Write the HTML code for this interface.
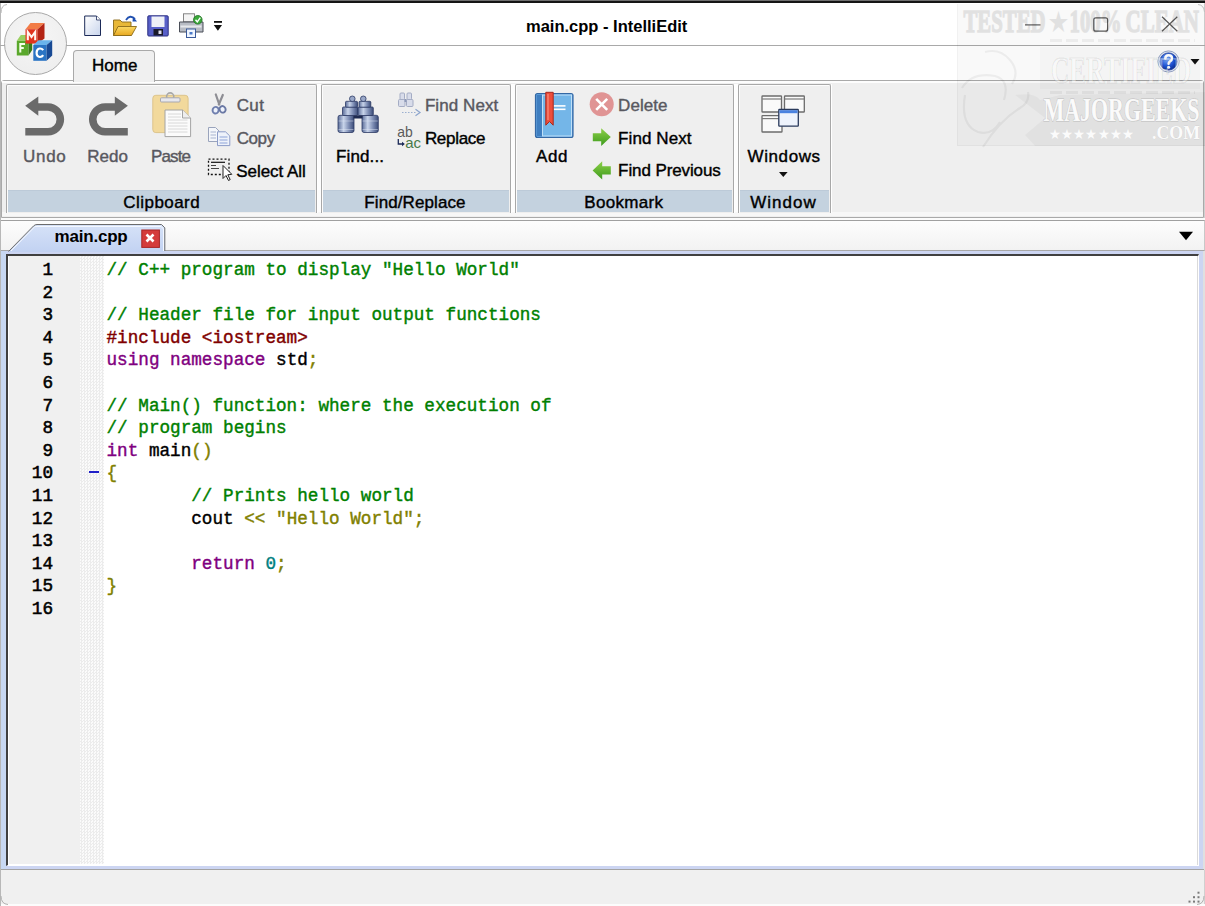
<!DOCTYPE html>
<html><head><meta charset="utf-8"><style>
html,body{margin:0;padding:0}
body{width:1205px;height:906px;overflow:hidden;position:relative;background:#fff}
div{box-sizing:border-box}
.t{position:absolute;white-space:pre;-webkit-text-stroke:0.4px currentColor}
.m span{-webkit-text-stroke:0.4px currentColor}
svg{position:absolute;left:0;top:0}
</style></head><body>
<div style="position:absolute;left:0px;top:0px;width:1205px;height:3px;background:linear-gradient(#707070 0,#707070 1px,#151515 1px)"></div>
<div style="position:absolute;left:0px;top:3px;width:1px;height:903px;background:#b8b8b8"></div>
<div style="position:absolute;left:1204px;top:3px;width:1px;height:903px;background:#d0d0d0"></div>
<div style="position:absolute;left:0px;top:45px;width:1205px;height:1px;background:#a9a9a9"></div>
<div style="position:absolute;left:4px;top:12px;width:63px;height:63px;border-radius:50%;border:1.5px solid #a9a9a9;background:radial-gradient(circle at 50% 40%,#f6f6f6,#ececec)"></div>
<div style="position:absolute;left:1px;top:80px;width:1203px;height:138px;border:1px solid #a9a9a9;border-radius:3px 3px 0 0;background:#efefef"></div>
<div style="position:absolute;left:2px;top:81px;width:1201px;height:2px;background:#fdfdfd"></div>
<div style="position:absolute;left:2px;top:212px;width:1201px;height:4px;background:#f7f7f7"></div>
<div style="position:absolute;left:73px;top:50px;width:82px;height:32px;border:1px solid #a9a9a9;border-bottom:none;border-radius:4px 4px 0 0;background:#f0f0f0"></div>
<div style="position:absolute;left:317px;top:84px;width:4px;height:128px;background:#fdfdfd"></div>
<div style="position:absolute;left:6px;top:83.5px;width:311px;height:129px;border:1px solid #a8a8a8;border-bottom:none;border-radius:2px 2px 0 0;background:#efefef;box-shadow:inset 1px 1px 0 #fcfcfc,1px 0 0 #fff"></div>
<div style="position:absolute;left:8px;top:190px;width:307px;height:21.5px;background:#c4d2df;border-top:1px solid #bccad8"></div>
<div style="position:absolute;left:511px;top:84px;width:4px;height:128px;background:#fdfdfd"></div>
<div style="position:absolute;left:321px;top:83.5px;width:190px;height:129px;border:1px solid #a8a8a8;border-bottom:none;border-radius:2px 2px 0 0;background:#efefef;box-shadow:inset 1px 1px 0 #fcfcfc,1px 0 0 #fff"></div>
<div style="position:absolute;left:323px;top:190px;width:186px;height:21.5px;background:#c4d2df;border-top:1px solid #bccad8"></div>
<div style="position:absolute;left:734px;top:84px;width:4px;height:128px;background:#fdfdfd"></div>
<div style="position:absolute;left:515px;top:83.5px;width:219px;height:129px;border:1px solid #a8a8a8;border-bottom:none;border-radius:2px 2px 0 0;background:#efefef;box-shadow:inset 1px 1px 0 #fcfcfc,1px 0 0 #fff"></div>
<div style="position:absolute;left:517px;top:190px;width:215px;height:21.5px;background:#c4d2df;border-top:1px solid #bccad8"></div>
<div style="position:absolute;left:831px;top:84px;width:1px;height:128px;background:#fdfdfd"></div>
<div style="position:absolute;left:738px;top:83.5px;width:93px;height:129px;border:1px solid #a8a8a8;border-bottom:none;border-radius:2px 2px 0 0;background:#efefef;box-shadow:inset 1px 1px 0 #fcfcfc,1px 0 0 #fff"></div>
<div style="position:absolute;left:740px;top:190px;width:89px;height:21.5px;background:#c4d2df;border-top:1px solid #bccad8"></div>
<div style="position:absolute;left:1px;top:218px;width:1204px;height:3px;background:#fbfbfb"></div>
<div style="position:absolute;left:1px;top:220px;width:1204px;height:31px;border-top:1px solid #a0a0a0;border-right:1px solid #c8c8c8;border-bottom:1px solid #a8a8a8;background:linear-gradient(#fdfdfd,#f2f2f2)"></div>
<div style="position:absolute;left:1px;top:251px;width:1203px;height:619px;background:#ccd5f2"></div>
<div style="position:absolute;left:1px;top:251px;width:5px;height:619px;background:#c8d8f2"></div>
<div style="position:absolute;left:6px;top:254px;width:1193px;height:612px;background:#fff;border-top:2px solid #404040;border-left:2px solid #404040;border-right:1px solid #fff;border-bottom:1px solid #fff"></div>
<div style="position:absolute;left:1197px;top:256px;width:1px;height:609px;background:#dadada"></div>
<div style="position:absolute;left:9px;top:256px;width:71px;height:608px;background:#f0f0f0"></div>
<div style="position:absolute;left:80px;top:256px;width:24px;height:608px;background-color:#fff;background-image:repeating-conic-gradient(#ececec 0 25%,#fbfbfb 0 50%);background-size:3px 3px"></div>
<div style="position:absolute;left:1203px;top:251px;width:2px;height:619px;background:#e0e0e0"></div>
<div style="position:absolute;left:89px;top:471px;width:10px;height:2px;background:#2020c8"></div>
<div style="position:absolute;left:957px;top:4px;width:248px;height:142px;background:rgba(0,0,0,0.025);border-left:1px solid rgba(0,0,0,0.03);border-bottom:1px solid rgba(0,0,0,0.03)"></div>
<div style="position:absolute;left:1px;top:869px;width:1203px;height:35px;background:#f0f0f0;border-top:1px solid #a4a4a4"></div>
<div style="position:absolute;left:1px;top:904px;width:1204px;height:2px;background:#fcfcfc"></div>
<svg width="1205" height="906" viewBox="0 0 1205 906"><defs>
<linearGradient id="gDoc" x1="0" y1="0" x2="1" y2="1"><stop offset="0" stop-color="#ffffff"/><stop offset="1" stop-color="#c8d4ec"/></linearGradient>
<linearGradient id="gFold" x1="0" y1="0" x2="0" y2="1"><stop offset="0" stop-color="#fbd964"/><stop offset="1" stop-color="#e8a820"/></linearGradient>
<linearGradient id="gBin" x1="0" y1="0" x2="1" y2="0"><stop offset="0" stop-color="#5a6c98"/><stop offset="0.35" stop-color="#c8d4ea"/><stop offset="0.7" stop-color="#7888b0"/><stop offset="1" stop-color="#3c4c78"/></linearGradient>
<radialGradient id="gHelp" cx="0.4" cy="0.35" r="0.7"><stop offset="0" stop-color="#7fb0ff"/><stop offset="0.6" stop-color="#1f55d8"/><stop offset="1" stop-color="#0c2c90"/></radialGradient>
<linearGradient id="gTab" x1="0" y1="0" x2="0" y2="1"><stop offset="0" stop-color="#d6e2f8"/><stop offset="1" stop-color="#c2d2f2"/></linearGradient>
<linearGradient id="gGreen" x1="0" y1="0" x2="0" y2="1"><stop offset="0" stop-color="#8cd048"/><stop offset="1" stop-color="#3c9a1c"/></linearGradient>
</defs>
<polygon points="16.8,40.8 20.8,35 32.2,35 28.5,40.8" fill="#9ad060"/>
<polygon points="16.8,40.8 28.5,40.8 28.5,55.5 16.8,55.5" fill="#5aa82c"/>
<polygon points="28.5,40.8 32.2,35 32.2,50 28.5,55.5" fill="#3a7a18"/>
<path d="M20.3,52.5 V44 H25 M20.3,48 H23.8" stroke="#f4ffe8" stroke-width="2" fill="none"/>
<polygon points="25.5,29.2 30.5,23 44.5,23 37.6,29.2" fill="#f27c46"/>
<polygon points="25.5,29.2 37.6,29.2 37.6,43.6 25.5,43.6" fill="#e0341e"/>
<polygon points="37.6,29.2 44.5,23 44.5,38.5 37.6,43.6" fill="#b42414"/>
<path d="M27.8,40.3 V32 L31.5,37 L35.2,32 V40.3" stroke="#fff6f0" stroke-width="2.1" fill="none" stroke-linejoin="miter"/>
<polygon points="33.3,45 38.6,40.2 52.2,40.2 46.6,45" fill="#6ab4ec"/>
<polygon points="33.3,45 46.6,45 46.6,60.8 33.3,60.8" fill="#2a74c4"/>
<polygon points="46.6,45 52.2,40.2 52.2,55.5 46.6,60.8" fill="#184a94"/>
<path d="M43.2,50.2 Q41.8,48.3 39.6,48.5 Q36.6,49 36.6,52.8 Q36.6,56.8 39.8,57 Q42,57.1 43.2,55.2" stroke="#fff" stroke-width="2.2" fill="none"/>
<path d="M84.7,16 H96.5 L100.5,20 V35.5 H84.7 Z" fill="url(#gDoc)" stroke="#1c2a58" stroke-width="1"/>
<path d="M96.5,16 V20 H100.5" fill="#fff" stroke="#1c2a58" stroke-width="0.8"/>
<path d="M113.5,20 H120 L122,22 H131 V35.5 H113.5 Z" fill="#e8b838" stroke="#8a6a18" stroke-width="0.9"/>
<path d="M113.5,35.5 L118,26.5 H136.5 L131.5,35.5 Z" fill="url(#gFold)" stroke="#8a6a18" stroke-width="0.9"/>
<path d="M126,20 Q130,14 135,19" stroke="#2050b0" stroke-width="1.8" fill="none"/>
<polygon points="133,16.5 137,21.5 132.5,21.5" fill="#2050b0"/>
<rect x="147.8" y="15.8" width="20.4" height="20.2" rx="1" fill="#5860c8" stroke="#2a2e80" stroke-width="1"/>
<rect x="151.5" y="16.5" width="13" height="10.5" fill="#eef0f6"/>
<rect x="153.5" y="29" width="9.5" height="6.5" fill="#1a1a2a"/>
<rect x="158.5" y="30.5" width="3" height="3.5" fill="#e0e0f0"/>
<rect x="183.5" y="13.8" width="11" height="8" fill="#f4f4f4" stroke="#7a7a7a" stroke-width="0.9"/>
<path d="M179.5,22 H203 V32 H179.5 Z" fill="#b8bcc4" stroke="#4a4e58" stroke-width="1"/>
<rect x="180.5" y="25.5" width="21" height="2" fill="#e6e8ec"/>
<rect x="186.5" y="29" width="9" height="8.5" fill="#f0f6ff" stroke="#3a5a9a" stroke-width="1"/>
<rect x="189.5" y="32" width="3" height="2.5" fill="#4a78c8"/>
<circle cx="197.8" cy="19.8" r="4.3" fill="#3aa83a" stroke="#1e6e1e" stroke-width="0.8"/>
<path d="M195.5,19.8 L197.3,21.8 L200.3,17.6" stroke="#fff" stroke-width="1.4" fill="none"/>
<rect x="214" y="21" width="8" height="1.8" fill="#111"/>
<polygon points="213.8,25 222,25 217.9,30.8" fill="#111"/>
<line x1="1025" y1="24.9" x2="1040.5" y2="24.9" stroke="#5a5a5a" stroke-width="1.2"/>
<rect x="1093.8" y="17.8" width="13.8" height="13.4" rx="2" fill="none" stroke="#5a5a5a" stroke-width="1.2"/>
<path d="M1162,16.8 L1177.3,31.3 M1177.3,16.8 L1162,31.3" stroke="#5a5a5a" stroke-width="1.2"/>
<circle cx="1168.5" cy="61.5" r="10.6" fill="#dfe6f4" stroke="#8090b8" stroke-width="0.8"/>
<circle cx="1168.5" cy="61.5" r="8.6" fill="url(#gHelp)" stroke="#1a3a9a" stroke-width="0.8"/>
<path d="M1165.3,58.6 Q1165.3,55.2 1168.6,55.2 Q1172,55.2 1172,58.3 Q1172,60.2 1170,61.3 Q1168.6,62 1168.6,63.8" stroke="#fff" stroke-width="2.5" fill="none" stroke-linecap="round"/>
<circle cx="1168.6" cy="67.2" r="1.5" fill="#fff"/>
<polygon points="1190.5,59 1199.5,59 1195,64.5" fill="#111"/>
<path d="M25.3,131.7 H48 A12.35,12.35 0 0 0 48,107 H37" stroke="#6a6a6a" stroke-width="7.6" fill="none"/>
<polygon points="25.2,105.8 38.3,96.6 38.3,115.8" fill="#6a6a6a"/>
<path d="M127.8,131.7 H105.1 A12.35,12.35 0 0 1 105.1,107 H116" stroke="#6a6a6a" stroke-width="7.6" fill="none"/>
<polygon points="127.9,105.8 114.8,96.6 114.8,115.8" fill="#6a6a6a"/>
<rect x="152.8" y="95.3" width="35.3" height="37.3" rx="3" fill="#f2d99c" stroke="#dcc48c" stroke-width="1"/>
<circle cx="170.2" cy="96.5" r="3.6" fill="none" stroke="#a8a8a8" stroke-width="1.6"/>
<rect x="160.5" y="97.8" width="19.5" height="4.2" rx="1" fill="#e8e8ee" stroke="#a8a8b0" stroke-width="1"/>
<path d="M165,110 H182.5 L190.6,118 V136.6 H165 Z" fill="#fbfbfb" stroke="#a4a4a4" stroke-width="1"/>
<path d="M182.5,110 V118 H190.6" fill="#eeeeee" stroke="#a4a4a4" stroke-width="1"/>
<line x1="168" y1="114" x2="181" y2="114" stroke="#d8d8d8" stroke-width="1"/>
<line x1="168" y1="117" x2="181" y2="117" stroke="#d8d8d8" stroke-width="1"/>
<line x1="168" y1="120" x2="187.5" y2="120" stroke="#d8d8d8" stroke-width="1"/>
<line x1="168" y1="123" x2="187.5" y2="123" stroke="#d8d8d8" stroke-width="1"/>
<line x1="168" y1="126" x2="187.5" y2="126" stroke="#d8d8d8" stroke-width="1"/>
<line x1="168" y1="129" x2="187.5" y2="129" stroke="#d8d8d8" stroke-width="1"/>
<line x1="168" y1="132" x2="187.5" y2="132" stroke="#d8d8d8" stroke-width="1"/>
<path d="M215.8,94.5 L219.3,104.5 M222.8,95 L218.8,104.5" stroke="#8e8e94" stroke-width="2.2" stroke-linecap="round"/>
<ellipse cx="215.6" cy="110.2" rx="3" ry="3.3" fill="#eef2fb" stroke="#6f7fae" stroke-width="1.9" transform="rotate(20 215.6 110.2)"/>
<ellipse cx="222.6" cy="109.3" rx="3" ry="3.3" fill="#eef2fb" stroke="#6a78a4" stroke-width="1.9" transform="rotate(-25 222.6 109.3)"/>
<path d="M208.5,127.5 H215.5 L219,131 V141.5 H208.5 Z" fill="#f4f6fa" stroke="#9aa4bc" stroke-width="1"/>
<line x1="210.5" y1="132" x2="216" y2="132" stroke="#a8b4d0" stroke-width="1"/>
<line x1="210.5" y1="135" x2="216" y2="135" stroke="#a8b4d0" stroke-width="1"/>
<line x1="210.5" y1="138" x2="216" y2="138" stroke="#a8b4d0" stroke-width="1"/>
<path d="M217.5,131.8 H225.5 L229.8,136 V145.6 H217.5 Z" fill="#eef2fa" stroke="#8c9cc8" stroke-width="1"/>
<line x1="219.5" y1="137" x2="227.5" y2="137" stroke="#8ea4d8" stroke-width="1"/>
<line x1="219.5" y1="140" x2="227.5" y2="140" stroke="#8ea4d8" stroke-width="1"/>
<line x1="219.5" y1="143" x2="227.5" y2="143" stroke="#8ea4d8" stroke-width="1"/>
<rect x="208.5" y="159.2" width="20.5" height="15.3" fill="none" stroke="#111" stroke-width="1.3" stroke-dasharray="2 2"/>
<line x1="211" y1="162.3" x2="225" y2="162.3" stroke="#111" stroke-width="1.2"/>
<line x1="211" y1="165.5" x2="216" y2="165.5" stroke="#444" stroke-width="1"/>
<line x1="211" y1="168.5" x2="219" y2="168.5" stroke="#444" stroke-width="1"/>
<path d="M223,165.5 V178.5 L226,175.5 L228.5,180.5 L230.2,179.6 L227.8,174.8 L231.8,174.3 Z" fill="#fff" stroke="#222" stroke-width="1"/>
<rect x="338" y="115.3" width="16" height="17.200000000000003" rx="2" fill="url(#gBin)" stroke="#2c3a64" stroke-width="0.8"/>
<rect x="362" y="115.3" width="16.30000000000001" height="17.200000000000003" rx="2" fill="url(#gBin)" stroke="#2c3a64" stroke-width="0.8"/>
<rect x="342.5" y="107" width="15.5" height="8.5" rx="1" fill="url(#gBin)" stroke="#2c3a64" stroke-width="0.8"/>
<rect x="358" y="107" width="15.300000000000011" height="8.5" rx="1" fill="url(#gBin)" stroke="#2c3a64" stroke-width="0.8"/>
<rect x="345.5" y="101.3" width="12.0" height="5.900000000000006" rx="1" fill="url(#gBin)" stroke="#2c3a64" stroke-width="0.8"/>
<rect x="359" y="101.3" width="11.800000000000011" height="5.900000000000006" rx="1" fill="url(#gBin)" stroke="#2c3a64" stroke-width="0.8"/>
<circle cx="352.3" cy="98.8" r="2.8" fill="#9aa8c8" stroke="#2c3a64" stroke-width="0.8"/>
<circle cx="363.3" cy="98.8" r="2.8" fill="#9aa8c8" stroke="#2c3a64" stroke-width="0.8"/>
<rect x="353.5" y="115.5" width="9" height="3" fill="#1e2a50"/>
<line x1="338.5" y1="121" x2="353.5" y2="121" stroke="#dfe6f4" stroke-width="0.8" opacity="0.6"/>
<line x1="362.5" y1="121" x2="377.8" y2="121" stroke="#dfe6f4" stroke-width="0.8" opacity="0.6"/>
<line x1="338.5" y1="129.5" x2="353.5" y2="129.5" stroke="#dfe6f4" stroke-width="0.8" opacity="0.6"/>
<line x1="362.5" y1="129.5" x2="377.8" y2="129.5" stroke="#dfe6f4" stroke-width="0.8" opacity="0.6"/>
<g fill="#d8dcea" stroke="#a4acc4" stroke-width="1"><rect x="398.5" y="99.5" width="6.5" height="7" rx="1"/><rect x="406.5" y="99.5" width="6.5" height="7" rx="1"/><rect x="400" y="93" width="4.5" height="6.5" rx="1"/><rect x="407" y="93" width="4.5" height="6.5" rx="1"/></g>
<rect x="404.5" y="99" width="2" height="3" fill="#8c98b8"/>
<line x1="402" y1="112.5" x2="416" y2="112.5" stroke="#9cb0d0" stroke-width="1.1" stroke-dasharray="1.5 1.5"/>
<path d="M415.5,109.3 L420,112.5 L415.5,115.7" stroke="#8ca4cc" stroke-width="1.2" fill="none"/>
<text x="397.3" y="137.2" font-family="'Liberation Sans',sans-serif" font-size="14.5" fill="#5a5a5a" textLength="15.5" lengthAdjust="spacingAndGlyphs">ab</text>
<text x="405.2" y="147.6" font-family="'Liberation Sans',sans-serif" font-size="14.5" fill="#4a7a4a" textLength="15.8" lengthAdjust="spacingAndGlyphs">ac</text>
<path d="M398.3,139 V144 H402.5" stroke="#1c2a58" stroke-width="1.3" fill="none"/>
<polygon points="402,141.8 404.8,144 402,146.2" fill="#1c2a58"/>
<rect x="535.5" y="93.5" width="37.5" height="44" rx="2" fill="#5a9ad6" stroke="#3468a4" stroke-width="1.2"/>
<rect x="542.5" y="95" width="29" height="41" fill="#74b6e8" stroke="#bfe0f8" stroke-width="1"/>
<rect x="537" y="95" width="5" height="41" fill="#3f7ec0"/>
<line x1="553.5" y1="105.9" x2="565.5" y2="105.9" stroke="#fff" stroke-width="1.6"/>
<line x1="553.5" y1="109.3" x2="565.5" y2="109.3" stroke="#fff" stroke-width="1.6"/>
<path d="M545.8,92.3 H553.2 V125.2 L549.5,121.5 L545.8,125.2 Z" fill="#ee4e3c" stroke="#a8281c" stroke-width="1"/>
<line x1="548" y1="94" x2="548" y2="120" stroke="#ffb0a0" stroke-width="0.8"/>
<circle cx="601.7" cy="104.3" r="12" fill="#e09494"/>
<path d="M596.2,98.8 L607.2,109.8 M607.2,98.8 L596.2,109.8" stroke="#fff" stroke-width="2.6"/>
<path d="M592.8,133.2 H601.2 V128.3 L610.8,137.1 L601.2,146 V141.2 H592.8 Z" fill="url(#gGreen)"/>
<path d="M610.8,166.2 H602.2 V161.3 L592.6,170.4 L602.2,179.6 V174.6 H610.8 Z" fill="url(#gGreen)"/>
<rect x="762" y="96" width="19.5" height="16" rx="0.6" fill="#fafafa" stroke="#6c6c6c" stroke-width="1.3"/><line x1="762" y1="99" x2="781.5" y2="99" stroke="#7a7a7a" stroke-width="1.2"/>
<rect x="784.5" y="96" width="19.799999999999955" height="16" rx="0.6" fill="#fafafa" stroke="#6c6c6c" stroke-width="1.3"/><line x1="784.5" y1="99" x2="804.3" y2="99" stroke="#7a7a7a" stroke-width="1.2"/>
<rect x="762" y="115.6" width="20" height="16.400000000000006" rx="0.6" fill="#fafafa" stroke="#6c6c6c" stroke-width="1.3"/><line x1="762" y1="118.6" x2="782" y2="118.6" stroke="#7a7a7a" stroke-width="1.2"/>
<rect x="778.8" y="109.5" width="19.5" height="16.700000000000003" rx="0.6" fill="#eef3fc" stroke="#2a3a5c" stroke-width="1.3"/><rect x="779.5" y="110.2" width="18.1" height="3" fill="#4a82e0"/>
<polygon points="779,172 787.6,172 783.3,177" fill="#111"/>
<path d="M8.5,252 L33.5,226 Q35,224.5 37,224.5 H161.5 L164.8,227.8 V252 Z" fill="url(#gTab)"/>
<path d="M8.5,251.5 L33.5,226 Q35,224.5 37,224.5 H161.5 L164.8,227.8 V251" fill="none" stroke="#6c6c6c" stroke-width="1"/>
<path d="M11,251 L35,226.5 H161 L163.5,229 V251" fill="none" stroke="#f4f8ff" stroke-width="1"/>
<rect x="141.8" y="230" width="17.6" height="17.4" fill="#d43c3c" stroke="#a82424" stroke-width="1"/>
<path d="M146.5,234.5 L153.5,241.5 M153.5,234.5 L146.5,241.5" stroke="#fff" stroke-width="2.6"/>
<polygon points="1179,231.8 1193,231.8 1186,240.2" fill="#000"/>
<rect x="1197.5" y="891.7" width="2" height="2" fill="#7a7a7a"/>
<rect x="1193" y="896.2" width="2" height="2" fill="#7a7a7a"/>
<rect x="1197.5" y="896.2" width="2" height="2" fill="#7a7a7a"/>
<rect x="1188.5" y="900.6" width="2" height="2" fill="#7a7a7a"/>
<rect x="1193" y="900.6" width="2" height="2" fill="#7a7a7a"/>
<rect x="1197.5" y="900.6" width="2" height="2" fill="#7a7a7a"/>
<path d="M1,13 Q1,5 7,4.5" stroke="#b8b8b8" stroke-width="1" fill="none"/>
<path d="M1198,4.5 Q1204,5 1204.5,12" stroke="#c0c0c0" stroke-width="1" fill="none"/>
<path d="M1,896 Q1,904 8,904.5" stroke="#b0b0b0" stroke-width="1" fill="none"/>
<path d="M1204,896 Q1204,904 1197,904.5" stroke="#b0b0b0" stroke-width="1" fill="none"/>
<g>
<path d="M985,52 Q1000,48 1010,60 Q1020,72 1012,84 M962,88 Q972,72 995,76 Q1010,80 1004,100 M965,95 Q960,125 978,132 Q992,136 1000,122 M983,147 Q1000,120 1020,108 Q1030,102 1028,92" stroke="rgba(0,0,0,0.05)" stroke-width="2.2" fill="none"/>
<path d="M1015,95 Q1035,92 1040,100 L1060,95 L1205,92 V146 H1035 L1025,135 L1045,118 Z" fill="rgba(0,0,0,0.03)"/>
<rect x="1040" y="47" width="160" height="42" fill="rgba(0,0,0,0.018)"/>
<line x1="1050" y1="40.5" x2="1195" y2="40.5" stroke="rgba(0,0,0,0.05)" stroke-width="3" stroke-dasharray="12 4"/>
<line x1="1050" y1="92.5" x2="1195" y2="92.5" stroke="rgba(0,0,0,0.05)" stroke-width="3" stroke-dasharray="12 4"/>
<g opacity="0.09">
<text x="963.5" y="32.3" font-family="'Liberation Serif',serif" font-weight="bold" font-size="32.5" fill="#000" stroke="#000" stroke-width="1.6" textLength="82" lengthAdjust="spacingAndGlyphs">TESTED</text>
<text x="1050.5" y="29" font-family="'Liberation Serif',serif" font-weight="bold" font-size="20" fill="#000" stroke="#000" stroke-width="1.6" textLength="15" lengthAdjust="spacingAndGlyphs">★</text>
<text x="1069.5" y="32.3" font-family="'Liberation Serif',serif" font-weight="bold" font-size="32.5" fill="#000" stroke="#000" stroke-width="1.6" textLength="52" lengthAdjust="spacingAndGlyphs">100%</text>
<text x="1125.5" y="32.3" font-family="'Liberation Serif',serif" font-weight="bold" font-size="32.5" fill="#000" stroke="#000" stroke-width="1.6" textLength="73.5" lengthAdjust="spacingAndGlyphs">CLEAN</text>
</g>
<text x="1051" y="83" font-family="'Liberation Serif',serif" font-weight="bold" font-size="37.5" fill="rgba(255,255,255,0.4)" stroke="rgba(0,0,0,0.075)" stroke-width="1.5" textLength="140" lengthAdjust="spacingAndGlyphs">CERTIFIED</text>
<text x="1043.5" y="120.8" font-family="'Liberation Serif',serif" font-weight="bold" font-size="34" fill="rgba(255,255,255,0.9)" stroke="rgba(0,0,0,0.09)" stroke-width="2" paint-order="stroke" textLength="156" lengthAdjust="spacingAndGlyphs">MAJORGEEKS</text>
<text x="1048.5" y="139" font-family="'Liberation Sans',sans-serif" font-size="14" fill="rgba(255,255,255,0.9)" textLength="86" lengthAdjust="spacingAndGlyphs">★★★★★★★</text>
<text x="1152" y="139.2" font-family="'Liberation Serif',serif" font-weight="bold" font-size="18" fill="rgba(255,255,255,0.9)" stroke="rgba(0,0,0,0.06)" stroke-width="1" paint-order="stroke" textLength="48" lengthAdjust="spacingAndGlyphs">.COM</text>
</g></svg>
<div class="t" style="left:526px;top:18.03px;font-weight:bold;font-size:16.5px;font-family:'Liberation Sans', sans-serif;line-height:16.5px;color:#000;letter-spacing:0px;-webkit-text-stroke:0">main.cpp - IntelliEdit</div>
<div class="t" style="left:92px;top:56.91px;font-weight:normal;font-size:17px;font-family:'Liberation Sans', sans-serif;line-height:17px;color:#000;letter-spacing:0px;">Home</div>
<div class="t" style="left:123.3px;top:193.51px;font-weight:normal;font-size:17px;font-family:'Liberation Sans', sans-serif;line-height:17px;color:#000;letter-spacing:0.45px;">Clipboard</div>
<div class="t" style="left:364.3px;top:193.51px;font-weight:normal;font-size:17px;font-family:'Liberation Sans', sans-serif;line-height:17px;color:#000;letter-spacing:0.1px;">Find/Replace</div>
<div class="t" style="left:584.3px;top:193.51px;font-weight:normal;font-size:17px;font-family:'Liberation Sans', sans-serif;line-height:17px;color:#000;letter-spacing:0.3px;">Bookmark</div>
<div class="t" style="left:750.3px;top:193.51px;font-weight:normal;font-size:17px;font-family:'Liberation Sans', sans-serif;line-height:17px;color:#000;letter-spacing:1.0px;">Window</div>
<div class="t" style="left:23.0px;top:147.71px;font-weight:normal;font-size:17px;font-family:'Liberation Sans', sans-serif;line-height:17px;color:#58585f;letter-spacing:0.7px;">Undo</div>
<div class="t" style="left:87.3px;top:147.71px;font-weight:normal;font-size:17px;font-family:'Liberation Sans', sans-serif;line-height:17px;color:#58585f;letter-spacing:0px;">Redo</div>
<div class="t" style="left:151.10000000000002px;top:147.71px;font-weight:normal;font-size:17px;font-family:'Liberation Sans', sans-serif;line-height:17px;color:#58585f;letter-spacing:-0.9px;">Paste</div>
<div class="t" style="left:236.70000000000002px;top:96.71px;font-weight:normal;font-size:17px;font-family:'Liberation Sans', sans-serif;line-height:17px;color:#58585f;letter-spacing:0.4px;">Cut</div>
<div class="t" style="left:236.70000000000002px;top:129.61px;font-weight:normal;font-size:17px;font-family:'Liberation Sans', sans-serif;line-height:17px;color:#58585f;letter-spacing:-0.4px;">Copy</div>
<div class="t" style="left:236.3px;top:162.61px;font-weight:normal;font-size:17px;font-family:'Liberation Sans', sans-serif;line-height:17px;color:#000;letter-spacing:-0.05px;">Select All</div>
<div class="t" style="left:336.1px;top:147.71px;font-weight:normal;font-size:17px;font-family:'Liberation Sans', sans-serif;line-height:17px;color:#000;letter-spacing:0.1px;">Find...</div>
<div class="t" style="left:424.90000000000003px;top:97.01px;font-weight:normal;font-size:17px;font-family:'Liberation Sans', sans-serif;line-height:17px;color:#58585f;letter-spacing:0.08px;">Find Next</div>
<div class="t" style="left:424.90000000000003px;top:129.91px;font-weight:normal;font-size:17px;font-family:'Liberation Sans', sans-serif;line-height:17px;color:#000;letter-spacing:-0.3px;">Replace</div>
<div class="t" style="left:536.0px;top:147.61px;font-weight:normal;font-size:17px;font-family:'Liberation Sans', sans-serif;line-height:17px;color:#000;letter-spacing:0.6px;">Add</div>
<div class="t" style="left:618.0999999999999px;top:96.91px;font-weight:normal;font-size:17px;font-family:'Liberation Sans', sans-serif;line-height:17px;color:#58585f;letter-spacing:0.05px;">Delete</div>
<div class="t" style="left:618.0999999999999px;top:129.61px;font-weight:normal;font-size:17px;font-family:'Liberation Sans', sans-serif;line-height:17px;color:#000;letter-spacing:0.08px;">Find Next</div>
<div class="t" style="left:618.0999999999999px;top:162.01px;font-weight:normal;font-size:17px;font-family:'Liberation Sans', sans-serif;line-height:17px;color:#000;letter-spacing:-0.1px;">Find Previous</div>
<div class="t" style="left:747.5px;top:147.61px;font-weight:normal;font-size:17px;font-family:'Liberation Sans', sans-serif;line-height:17px;color:#000;letter-spacing:0.6px;">Windows</div>
<div class="t" style="left:54.5px;top:227.91px;font-weight:bold;font-size:17px;font-family:'Liberation Sans', sans-serif;line-height:17px;color:#000;letter-spacing:-0.2px;-webkit-text-stroke:0">main.cpp</div>
<div class="t m" style="left:106.5px;top:261.96px;font-weight:normal;font-size:17.66px;font-family:'Liberation Mono', monospace;line-height:17.66px;color:#000;letter-spacing:0px;"><span style="color:#008000">// C++ program to display "Hello World"</span></div>
<div class="t" style="left:0;top:261.96px;width:53px;text-align:right;font:normal 17.66px 'Liberation Mono', monospace;line-height:17.66px;color:#000;-webkit-text-stroke:0.55px #000">1</div>
<div class="t" style="left:0;top:284.56px;width:53px;text-align:right;font:normal 17.66px 'Liberation Mono', monospace;line-height:17.66px;color:#000;-webkit-text-stroke:0.55px #000">2</div>
<div class="t m" style="left:106.5px;top:307.16px;font-weight:normal;font-size:17.66px;font-family:'Liberation Mono', monospace;line-height:17.66px;color:#000;letter-spacing:0px;"><span style="color:#008000">// Header file for input output functions</span></div>
<div class="t" style="left:0;top:307.16px;width:53px;text-align:right;font:normal 17.66px 'Liberation Mono', monospace;line-height:17.66px;color:#000;-webkit-text-stroke:0.55px #000">3</div>
<div class="t m" style="left:106.5px;top:329.76px;font-weight:normal;font-size:17.66px;font-family:'Liberation Mono', monospace;line-height:17.66px;color:#000;letter-spacing:0px;"><span style="color:#800000">#include &lt;iostream&gt;</span></div>
<div class="t" style="left:0;top:329.76px;width:53px;text-align:right;font:normal 17.66px 'Liberation Mono', monospace;line-height:17.66px;color:#000;-webkit-text-stroke:0.55px #000">4</div>
<div class="t m" style="left:106.5px;top:352.36px;font-weight:normal;font-size:17.66px;font-family:'Liberation Mono', monospace;line-height:17.66px;color:#000;letter-spacing:0px;"><span style="color:#800080">using namespace</span><span style="color:#000"> std</span><span style="color:#808000">;</span></div>
<div class="t" style="left:0;top:352.36px;width:53px;text-align:right;font:normal 17.66px 'Liberation Mono', monospace;line-height:17.66px;color:#000;-webkit-text-stroke:0.55px #000">5</div>
<div class="t" style="left:0;top:374.96px;width:53px;text-align:right;font:normal 17.66px 'Liberation Mono', monospace;line-height:17.66px;color:#000;-webkit-text-stroke:0.55px #000">6</div>
<div class="t m" style="left:106.5px;top:397.56px;font-weight:normal;font-size:17.66px;font-family:'Liberation Mono', monospace;line-height:17.66px;color:#000;letter-spacing:0px;"><span style="color:#008000">// Main() function: where the execution of</span></div>
<div class="t" style="left:0;top:397.56px;width:53px;text-align:right;font:normal 17.66px 'Liberation Mono', monospace;line-height:17.66px;color:#000;-webkit-text-stroke:0.55px #000">7</div>
<div class="t m" style="left:106.5px;top:420.16px;font-weight:normal;font-size:17.66px;font-family:'Liberation Mono', monospace;line-height:17.66px;color:#000;letter-spacing:0px;"><span style="color:#008000">// program begins</span></div>
<div class="t" style="left:0;top:420.16px;width:53px;text-align:right;font:normal 17.66px 'Liberation Mono', monospace;line-height:17.66px;color:#000;-webkit-text-stroke:0.55px #000">8</div>
<div class="t m" style="left:106.5px;top:442.76px;font-weight:normal;font-size:17.66px;font-family:'Liberation Mono', monospace;line-height:17.66px;color:#000;letter-spacing:0px;"><span style="color:#800080">int</span><span style="color:#000"> main</span><span style="color:#808000">()</span></div>
<div class="t" style="left:0;top:442.76px;width:53px;text-align:right;font:normal 17.66px 'Liberation Mono', monospace;line-height:17.66px;color:#000;-webkit-text-stroke:0.55px #000">9</div>
<div class="t m" style="left:106.5px;top:465.36px;font-weight:normal;font-size:17.66px;font-family:'Liberation Mono', monospace;line-height:17.66px;color:#000;letter-spacing:0px;"><span style="color:#808000">{</span></div>
<div class="t" style="left:0;top:465.36px;width:53px;text-align:right;font:normal 17.66px 'Liberation Mono', monospace;line-height:17.66px;color:#000;-webkit-text-stroke:0.55px #000">10</div>
<div class="t m" style="left:106.5px;top:487.96px;font-weight:normal;font-size:17.66px;font-family:'Liberation Mono', monospace;line-height:17.66px;color:#000;letter-spacing:0px;"><span style="color:#008000">        // Prints hello world</span></div>
<div class="t" style="left:0;top:487.96px;width:53px;text-align:right;font:normal 17.66px 'Liberation Mono', monospace;line-height:17.66px;color:#000;-webkit-text-stroke:0.55px #000">11</div>
<div class="t m" style="left:106.5px;top:510.56px;font-weight:normal;font-size:17.66px;font-family:'Liberation Mono', monospace;line-height:17.66px;color:#000;letter-spacing:0px;"><span style="color:#000">        cout</span><span style="color:#808000"> &lt;&lt; "Hello World";</span></div>
<div class="t" style="left:0;top:510.56px;width:53px;text-align:right;font:normal 17.66px 'Liberation Mono', monospace;line-height:17.66px;color:#000;-webkit-text-stroke:0.55px #000">12</div>
<div class="t" style="left:0;top:533.16px;width:53px;text-align:right;font:normal 17.66px 'Liberation Mono', monospace;line-height:17.66px;color:#000;-webkit-text-stroke:0.55px #000">13</div>
<div class="t m" style="left:106.5px;top:555.76px;font-weight:normal;font-size:17.66px;font-family:'Liberation Mono', monospace;line-height:17.66px;color:#000;letter-spacing:0px;"><span style="color:#800080">        return</span><span style="color:#008080"> 0</span><span style="color:#808000">;</span></div>
<div class="t" style="left:0;top:555.76px;width:53px;text-align:right;font:normal 17.66px 'Liberation Mono', monospace;line-height:17.66px;color:#000;-webkit-text-stroke:0.55px #000">14</div>
<div class="t m" style="left:106.5px;top:578.36px;font-weight:normal;font-size:17.66px;font-family:'Liberation Mono', monospace;line-height:17.66px;color:#000;letter-spacing:0px;"><span style="color:#808000">}</span></div>
<div class="t" style="left:0;top:578.36px;width:53px;text-align:right;font:normal 17.66px 'Liberation Mono', monospace;line-height:17.66px;color:#000;-webkit-text-stroke:0.55px #000">15</div>
<div class="t" style="left:0;top:600.96px;width:53px;text-align:right;font:normal 17.66px 'Liberation Mono', monospace;line-height:17.66px;color:#000;-webkit-text-stroke:0.55px #000">16</div>
</body></html>
